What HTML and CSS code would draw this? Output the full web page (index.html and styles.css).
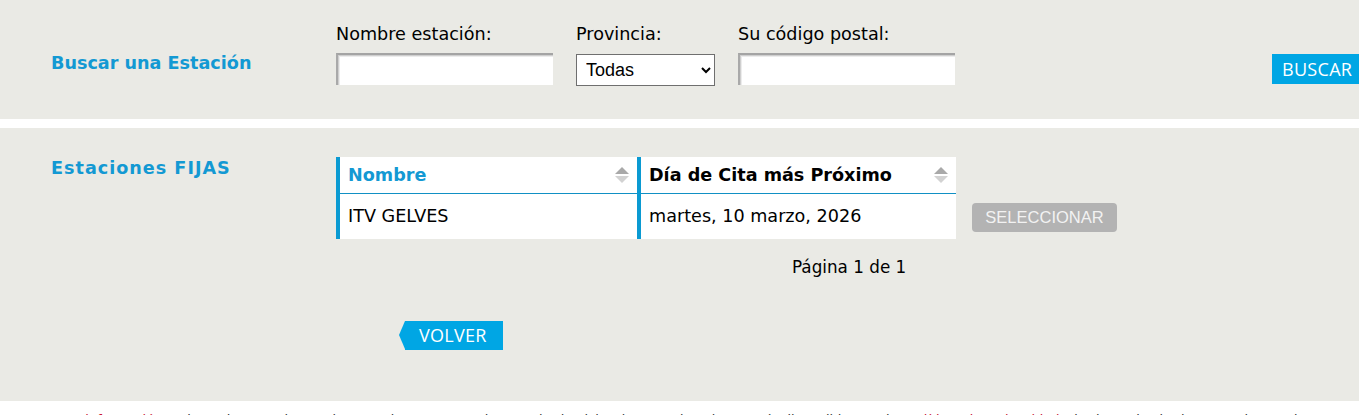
FILE: index.html
```html
<!DOCTYPE html>
<html lang="es">
<head>
<meta charset="utf-8">
<title>Buscar una Estación</title>
<link rel="stylesheet" href="styles.css">
</head>
<body>
<section class="panel search">
  <h2 class="panel-title search-title">Buscar una Estación</h2>
  <div class="field field-wide">
    <label class="field-label" for="nombre">Nombre estación:</label>
    <input class="text-input" id="nombre" type="text">
  </div>
  <div class="field field-narrow">
    <label class="field-label" for="provincia">Provincia:</label>
    <select class="select-input" id="provincia">
      <option>Todas</option>
    </select>
  </div>
  <div class="field field-wide">
    <label class="field-label" for="cp">Su código postal:</label>
    <input class="text-input" id="cp" type="text">
  </div>
  <button class="btn-blue btn-buscar" type="button">BUSCAR</button>
</section>

<section class="panel results">
  <h2 class="panel-title results-title">Estaciones FIJAS</h2>
  <div class="results-body">
    <div class="table-row">
      <table class="stations">
        <thead>
          <tr>
            <th class="col-name"><div class="th-inner"><span class="th-blue">Nombre</span><span class="sort"><span class="sort-up"></span><span class="sort-down"></span></span></div></th>
            <th class="col-date"><div class="th-inner"><span>Día de Cita más Próximo</span><span class="sort"><span class="sort-up"></span><span class="sort-down"></span></span></div></th>
          </tr>
        </thead>
        <tbody>
          <tr>
            <td class="col-name"><span class="cell-text">ITV GELVES</span></td>
            <td class="col-date"><span class="cell-text">martes, 10 marzo, 2026</span></td>
          </tr>
        </tbody>
      </table>
      <button class="btn-grey" type="button">SELECCIONAR</button>
    </div>
    <p class="pager">Página 1 de 1</p>
    <button class="btn-blue btn-volver" type="button">VOLVER</button>
  </div>
</section>

<p class="footer-note">La <span class="red">información</span> sobre el tratamiento de sus datos personales y el ejercicio de sus derechos está disponible en la <span class="red">política de privacidad</span> de la web de las estaciones de ITV.</p>
</body>
</html>
```

FILE: styles.css
```css
html, body {
  margin: 0;
  padding: 0;
  background: #ffffff;
  overflow: hidden;
}

body {
  font-family: "DejaVu Sans", Verdana, sans-serif;
  font-size: 17.6px;
  color: #000;
}

.panel {
  background: #eaeae5;
  display: flex;
  align-items: flex-start;
}

.search {
  height: 119px;
  box-sizing: border-box;
  padding: 24px 0 0 51px;
  margin-bottom: 9px;
}

.panel-title {
  margin: 0;
  font-size: 17.6px;
  font-weight: bold;
  color: #1399d3;
  width: 285px;
  flex: none;
}

.search-title {
  margin-top: 29px;
}

.field {
  display: flex;
  flex-direction: column;
  flex: none;
  margin-right: 23px;
}

.field-wide { width: 217px; }
.field-narrow { width: 139px; }

.field-label {
  height: 20px;
  line-height: 20px;
  margin-bottom: 9px;
  white-space: nowrap;
}

.text-input {
  box-sizing: border-box;
  width: 217px;
  height: 32px;
  margin: 0;
  padding: 0 4px;
  background: #fff;
  border-style: solid;
  border-width: 2px 0 0 2px;
  border-color: #a4a4a4 transparent transparent #a9a9a9;
  box-shadow: inset 1px 1px 0 #cfcfcf, inset 2px 2px 0 #ececec;
  outline: none;
  font: inherit;
}

.select-input {
  box-sizing: border-box;
  width: 139px;
  height: 32px;
  margin: 1px 0 0 0;
  padding: 0 0 0 5px;
  border: 1px solid #6f6f6f;
  border-radius: 0;
  background: #fff;
  color: #000;
  font-family: "Liberation Sans", Arial, sans-serif;
  font-size: 18px;
}

.btn-blue {
  background: #00a6e4;
  color: #fff;
  border: 0;
  font-family: "Open Sans", sans-serif;
  font-size: 18px;
  cursor: pointer;
}

.btn-buscar {
  flex: none;
  margin: 30px 0 0 294px;
  height: 30px;
  padding: 0 10px;
  border-radius: 0 4px 4px 0;
  line-height: 29px;
  letter-spacing: 0.3px;
}

.results {
  height: 273px;
  box-sizing: border-box;
  padding: 29px 0 0 51px;
}

.results-title {
  margin-top: 0;
  line-height: 22px;
  letter-spacing: 1px;
}

.results-body {
  display: flex;
  flex-direction: column;
  align-items: flex-start;
}

.table-row {
  display: flex;
  align-items: flex-end;
}

.stations {
  border-collapse: collapse;
  background: #fff;
  width: 620px;
}

.stations th,
.stations td {
  padding: 0 0 0 8px;
  text-align: left;
  border-left: 4px solid #0a9ad2;
}

.stations th {
  height: 36px;
  border-bottom: 1px solid #1190c4;
  font-weight: bold;
  vertical-align: middle;
}

.stations td {
  height: 45px;
  vertical-align: middle;
}

.cell-text {
  position: relative;
  top: -1px;
}

.col-name { width: 289px; }
.col-date { width: 307px; }

.th-inner {
  display: flex;
  align-items: center;
  justify-content: space-between;
  padding-right: 8px;
}

.th-blue { color: #1399d3; }

.sort {
  display: flex;
  flex-direction: column;
  align-items: center;
  gap: 2px;
}

.sort-up,
.sort-down {
  width: 0;
  height: 0;
  border-left: 7px solid transparent;
  border-right: 7px solid transparent;
}

.sort-up { border-bottom: 7px solid #a9a9a9; }
.sort-down { border-top: 7px solid #d2d2d2; }

.btn-grey {
  margin: 0 0 7px 16px;
  width: 145px;
  height: 29px;
  background: #b3b3b3;
  color: #f2f2f2;
  border: 0;
  border-radius: 4px;
  font-family: "Liberation Sans", Arial, sans-serif;
  font-size: 16.5px;
  padding: 0;
}

.pager {
  margin: 18px 0 0 456px;
  font-size: 16.8px;
  line-height: 20px;
}

.btn-volver {
  position: relative;
  margin: 44px 0 0 69px;
  height: 29px;
  padding: 0 16px 0 14px;
  line-height: 29px;
  letter-spacing: 0.3px;
}

.btn-volver::before {
  content: "";
  position: absolute;
  left: -6px;
  top: 0;
  width: 0;
  height: 0;
  border-top: 14.5px solid transparent;
  border-bottom: 14.5px solid transparent;
  border-right: 6px solid #00a6e4;
}

.footer-note {
  margin: 11px 0 0 60px;
  font-size: 13px;
  line-height: 16px;
  color: #333;
  white-space: nowrap;
  word-spacing: 6px;
}

.red { color: #c8102e; }
```
